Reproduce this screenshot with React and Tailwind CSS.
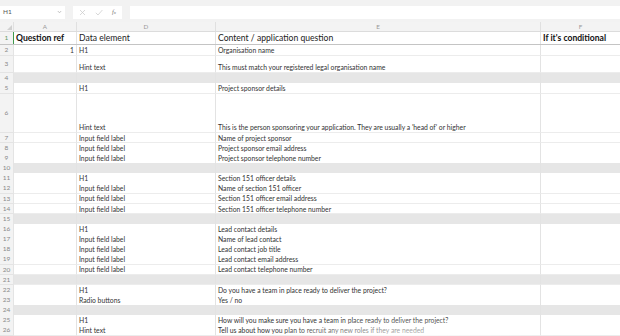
import React from 'react';

const font = { fontFamily: 'Lato, "Open Sans", sans-serif' };

const rows = [
    { n: 2, a: '1', d: 'H1', e: 'Organisation name', h: 'h-[10.5px]' },
    { n: 3, d: 'Hint text', e: 'This must match your registered legal organisation name', h: 'h-[17.5px]' },
    { n: 4, gray: true, h: 'h-[10.2px]' },
    { n: 5, d: 'H1', e: 'Project sponsor details', h: 'h-[10.5px]' },
    { n: 6, d: 'Hint text', e: "This is the person sponsoring your application. They are usually a 'head of' or higher", h: 'h-[39px]' },
    { n: 7, d: 'Input field label', e: 'Name of project sponsor' },
    { n: 8, d: 'Input field label', e: 'Project sponsor email address' },
    { n: 9, d: 'Input field label', e: 'Project sponsor telephone number' },
    { n: 10, gray: true },
    { n: 11, d: 'H1', e: 'Section 151 officer details' },
    { n: 12, d: 'Input field label', e: 'Name of section 151 officer' },
    { n: 13, d: 'Input field label', e: 'Section 151 officer email address' },
    { n: 14, d: 'Input field label', e: 'Section 151 officer telephone number' },
    { n: 15, gray: true },
    { n: 16, d: 'H1', e: 'Lead contact details' },
    { n: 17, d: 'Input field label', e: 'Name of lead contact' },
    { n: 18, d: 'Input field label', e: 'Lead contact job title' },
    { n: 19, d: 'Input field label', e: 'Lead contact email address' },
    { n: 20, d: 'Input field label', e: 'Lead contact telephone number' },
    { n: 21, gray: true },
    { n: 22, d: 'H1', e: 'Do you have a team in place ready to deliver the project?' },
    { n: 23, d: 'Radio buttons', e: 'Yes / no' },
    { n: 24, gray: true },
    { n: 25, d: 'H1', e: 'How will you make sure you have a team in place ready to deliver the project?' },
    { n: 26, d: 'Hint text', e: 'Tell us about how you plan to recruit any new roles if they are needed' },
];

const cols = 'grid grid-cols-[14px_63px_139px_325px_1fr]';

const Cell = ({ children, gray, right, last }) => (
    <div className={`flex items-end px-[2px] pb-[1px] text-[6.8px] leading-none text-[#333] whitespace-nowrap overflow-visible border-b border-[#ececec] ${last ? '' : 'border-r border-r-[#e3e3e3]'} ${gray ? 'bg-[#e6e6e6]' : 'bg-white'} ${right ? 'justify-end' : ''}`}>
        {children}
    </div>
);

export default function App() {
    return (
        <div className="relative w-[620px] h-[336px] overflow-hidden bg-white" style={font}>
            {/* formula bar */}
            <div className="h-[22px] bg-[#f2f2f2] flex items-center gap-[8px] pt-[2px]">
                <div className="w-[65px] h-[13px] bg-white flex items-center justify-between pl-[3px] pr-[3px] text-[6.5px] text-[#555]">
                    <span>H1</span>
                    <svg width="5" height="4" viewBox="0 0 5 4"><path d="M0.8 1 L2.5 2.8 L4.2 1" fill="none" stroke="#aaa" strokeWidth="0.7" /></svg>
                </div>
                <div className="w-[49px] h-[13px] bg-white flex items-center gap-[9px] pl-[6px]">
                    <svg width="7" height="7" viewBox="0 0 7 7"><path d="M1 1 L6 6 M6 1 L1 6" stroke="#c8c8c8" strokeWidth="0.7" /></svg>
                    <svg width="8" height="7" viewBox="0 0 8 7"><path d="M0.8 3.8 L3 6 L7.4 1" fill="none" stroke="#c8c8c8" strokeWidth="0.7" /></svg>
                    <span className="text-[6.5px] italic text-[#777]" style={{ fontFamily: '"Liberation Serif", serif' }}>f<span className="text-[5px]">x</span></span>
                </div>
                <div className="flex-1 h-[13px] bg-white" />
            </div>

            {/* column headers */}
            <div className={`${cols} h-[10px] bg-[#f3f3f3] border-b border-[#dcdcdc] text-[6.3px] text-[#999]`}>
                <div className="flex items-end justify-end pr-[1px] pb-[1px] border-r border-[#e0e0e0]">
                    <svg width="5" height="5" viewBox="0 0 5 5"><path d="M5 0 L5 5 L0 5 Z" fill="#d0d0d0" /></svg>
                </div>
                <div className="flex items-center justify-center border-r border-[#e0e0e0]">A</div>
                <div className="flex items-center justify-center border-r border-[#e0e0e0]">D</div>
                <div className="flex items-center justify-center border-r border-[#e0e0e0]">E</div>
                <div className="flex items-center justify-center">F</div>
            </div>

            {/* header row */}
            <div className={`${cols} h-[13px] border-b-[1.5px] border-[#c4c4c4]`}>
                <div className="bg-[#f3f3f3] flex items-center justify-center text-[6.5px] text-[#5f9a64] border-r-[1.5px] border-[#3f9a4b]">1</div>
                <div className="flex items-end pl-[2px] pb-[1px] text-[8.6px] leading-none font-bold text-[#111] border-r border-[#e3e3e3]">Question ref</div>
                <div className="flex items-end pl-[2px] pb-[1px] text-[8.6px] leading-none text-[#222] border-r border-[#e3e3e3]">Data element</div>
                <div className="flex items-end pl-[2px] pb-[1px] text-[8.6px] leading-none text-[#222] border-r border-[#e3e3e3]">Content / application question</div>
                <div className="flex items-end pl-[2px] pb-[1px] text-[8.6px] leading-none font-bold text-[#111]">If it's conditional</div>
            </div>

            {rows.map(r => (
                <div key={r.n} className={`${cols} ${r.h || 'h-[10.15px]'}`}>
                    <div className="bg-[#f3f3f3] flex items-center justify-center text-[6.5px] text-[#888] border-r border-b border-[#e4e4e4]">{r.n}</div>
                    <Cell gray={r.gray} right>{r.a}</Cell>
                    <Cell gray={r.gray}>{r.d}</Cell>
                    <Cell gray={r.gray}>{r.e}</Cell>
                    <Cell gray={r.gray} last />
                </div>
            ))}

            {/* soft glare near the bottom edge */}
            <div className="pointer-events-none absolute left-[260px] bottom-[-20px] w-[300px] h-[40px] rounded-full bg-[radial-gradient(ellipse_at_center,rgba(255,255,255,0.75),rgba(255,255,255,0)_70%)]" />
        </div>
    );
}
